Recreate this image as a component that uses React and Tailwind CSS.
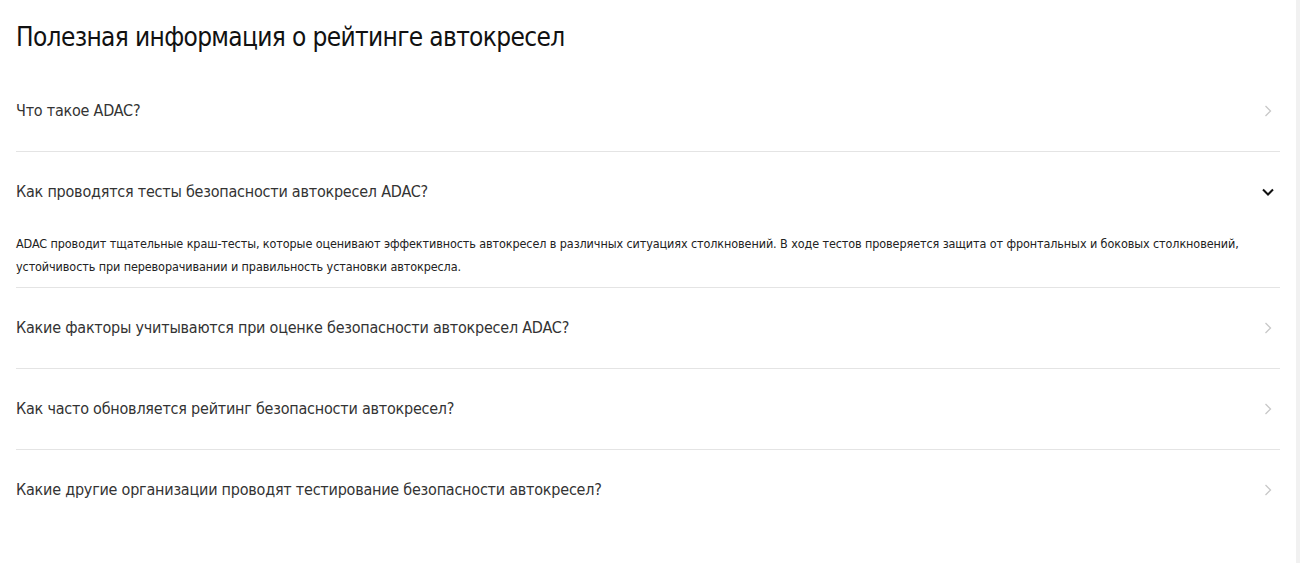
import React from 'react';

const font = { fontFamily: '"Liberation Sans Narrow", "DejaVu Sans Condensed", "Roboto", sans-serif' };

const items = [
  { q: 'Что такое ADAC?' },
  {
    q: 'Как проводятся тесты безопасности автокресел ADAC?',
    a: 'ADAC проводит тщательные краш-тесты, которые оценивают эффективность автокресел в различных ситуациях столкновений. В ходе тестов проверяется защита от фронтальных и боковых столкновений, устойчивость при переворачивании и правильность установки автокресла.',
  },
  { q: 'Какие факторы учитываются при оценке безопасности автокресел ADAC?' },
  { q: 'Как часто обновляется рейтинг безопасности автокресел?' },
  { q: 'Какие другие организации проводят тестирование безопасности автокресел?' },
];

const ChevronRight = () => (
  <svg width="8" height="12" viewBox="0 0 8 12" fill="none" stroke="#c8c8c8" strokeWidth="1.3">
    <path d="M1.5 1l5 5-5 5" />
  </svg>
);

const ChevronDown = () => (
  <svg width="12" height="8" viewBox="0 0 12 8" fill="none" stroke="#111" strokeWidth="2">
    <path d="M1 1.5l5 5 5-5" />
  </svg>
);

export default function App() {
  return (
    <div className="w-[1300px] h-[563px] bg-white flex" style={font}>
      <div className="flex-1 pl-4 pr-4">
        <h2 className="h-[71px] pt-[19px] text-[26px] leading-[36px] tracking-[-0.65px] text-[#111] font-normal">
          Полезная информация о рейтинге автокресел
        </h2>
        {items.map((it, i) => (
          <div key={i} className={i < items.length - 1 ? 'border-b border-[#e4e4e4]' : ''}>
            <div className="h-[80px] flex items-center justify-between">
              <span className="text-[16px] tracking-[-0.22px] text-[#333]">{it.q}</span>
              <span className="w-6 flex justify-center">{it.a ? <ChevronDown /> : <ChevronRight />}</span>
            </div>
            {it.a && (
              <p className="text-[12.5px] leading-[23px] tracking-[-0.1px] text-[#222] pb-[9px] pr-6">{it.a}</p>
            )}
          </div>
        ))}
      </div>
      <div className="w-[4px] bg-[#f1f1f1]" />
    </div>
  );
}
